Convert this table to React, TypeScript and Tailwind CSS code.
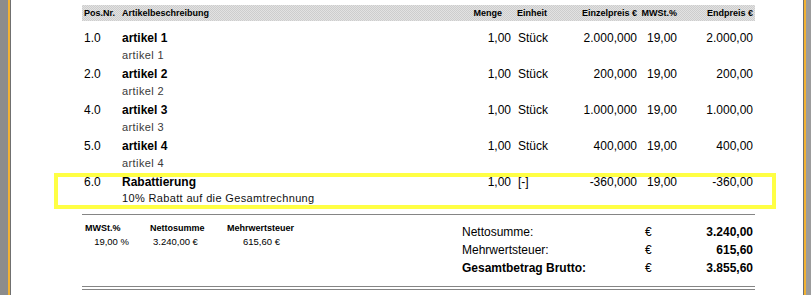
import React from "react";

type Row = {
  pos: string;
  title: string;
  sub: string;
  subAlt?: boolean;
  menge: string;
  einheit: string;
  einzel: string;
  mwst: string;
  end: string;
};

const rows: Row[] = [
  { pos: "1.0", title: "artikel 1", sub: "artikel 1", menge: "1,00", einheit: "Stück", einzel: "2.000,000", mwst: "19,00", end: "2.000,00" },
  { pos: "2.0", title: "artikel 2", sub: "artikel 2", menge: "1,00", einheit: "Stück", einzel: "200,000", mwst: "19,00", end: "200,00" },
  { pos: "4.0", title: "artikel 3", sub: "artikel 3", menge: "1,00", einheit: "Stück", einzel: "1.000,000", mwst: "19,00", end: "1.000,00" },
  { pos: "5.0", title: "artikel 4", sub: "artikel 4", menge: "1,00", einheit: "Stück", einzel: "400,000", mwst: "19,00", end: "400,00" },
  { pos: "6.0", title: "Rabattierung", sub: "10% Rabatt auf die Gesamtrechnung", subAlt: true, menge: "1,00", einheit: "[-]", einzel: "-360,000", mwst: "19,00", end: "-360,00" },
];

export default function App() {
  return (
    <div
      className="w-[811px] h-[295px] flex bg-white text-black overflow-hidden"
      style={{ fontFamily: '"Liberation Sans", Arial, sans-serif' }}
    >
      {/* left frame */}
      <div className="w-[8px] h-full bg-[#8c8c8c]" />
      <div className="w-[2px] h-full bg-[#f2b233]" />
      <div className="w-[1px] h-full bg-[#707070]" />

      {/* page */}
      <div className="relative flex-1 h-full pl-[71px] pt-[5px]">
        <div className="w-[673px] flex flex-col">
          {/* header */}
          <div className="h-[16px] flex items-center text-[9px] font-bold leading-none bg-[repeating-conic-gradient(#cdcdcd_0%_25%,#e2e2e2_0%_50%)] bg-[length:2px_2px]">
            <div className="w-[40px] pl-[2px]">Pos.Nr.</div>
            <div className="w-[349px]">Artikelbeschreibung</div>
            <div className="w-[40px] text-right pr-[9px] whitespace-nowrap">Menge</div>
            <div className="w-[58px] pl-[6px]">Einheit</div>
            <div className="w-[68px] text-right whitespace-nowrap">Einzelpreis €</div>
            <div className="w-[40px] text-right">MWSt.%</div>
            <div className="w-[76px] text-right whitespace-nowrap">Endpreis €</div>
          </div>

          {/* rows */}
          <div className="mt-[10px] flex flex-col">
            {rows.map((r) => (
              <div key={r.pos} className="h-[36px] flex flex-col">
                <div className="h-[14px] flex items-center text-[12px] leading-[14px]">
                  <div className="w-[40px] pl-[2px]">{r.pos}</div>
                  <div className="w-[349px] font-bold">{r.title}</div>
                  <div className="w-[40px] text-right">{r.menge}</div>
                  <div className="w-[58px] pl-[7px]">{r.einheit}</div>
                  <div className="w-[68px] text-right">{r.einzel}</div>
                  <div className="w-[40px] text-right">{r.mwst}</div>
                  <div className="w-[76px] text-right">{r.end}</div>
                </div>
                <div
                  className={
                    r.subAlt
                      ? "mt-[2px] h-[14px] pl-[40px] text-[11px] leading-[14px] tracking-[0.35px] text-[#111]"
                      : "mt-[3px] h-[14px] pl-[40px] text-[11px] leading-[14px] tracking-[0.4px] text-[#3a3a3a]"
                  }
                >
                  {r.sub}
                </div>
              </div>
            ))}
          </div>

          {/* separator */}
          <div className="mt-[3px] h-[1px] bg-[#858585]" />

          {/* summary */}
          <div className="h-[71px] flex">
            <div className="w-[380px] flex pt-[7px]">
              <div className="w-[63px] flex flex-col">
                <div className="h-[12px] leading-[12px] text-[9px] font-bold pl-[3px]">MWSt.%</div>
                <div className="mt-[2px] h-[12px] leading-[12px] text-[9.5px] text-right pr-[16px]">19,00 %</div>
              </div>
              <div className="w-[77px] flex flex-col">
                <div className="h-[12px] leading-[12px] text-[9px] font-bold pl-[5px]">Nettosumme</div>
                <div className="mt-[2px] h-[12px] leading-[12px] text-[9.5px] pl-[8px]">3.240,00 €</div>
              </div>
              <div className="w-[100px] flex flex-col">
                <div className="h-[12px] leading-[12px] text-[9px] font-bold pl-[5px]">Mehrwertsteuer</div>
                <div className="mt-[2px] h-[12px] leading-[12px] text-[9.5px] pl-[21px]">615,60 €</div>
              </div>
            </div>
            <div className="w-[293px] pt-[8px] flex flex-col text-[12px] leading-[18px]">
              <div className="flex h-[18px]">
                <div className="w-[183px]">Nettosumme:</div>
                <div className="w-[20px]">€</div>
                <div className="flex-1 text-right pr-[2px] font-bold">3.240,00</div>
              </div>
              <div className="flex h-[18px]">
                <div className="w-[183px]">Mehrwertsteuer:</div>
                <div className="w-[20px]">€</div>
                <div className="flex-1 text-right pr-[2px] font-bold">615,60</div>
              </div>
              <div className="flex h-[18px] font-bold">
                <div className="w-[183px]">Gesamtbetrag Brutto:</div>
                <div className="w-[20px] font-normal">€</div>
                <div className="flex-1 text-right pr-[2px]">3.855,60</div>
              </div>
            </div>
          </div>

          {/* double line */}
          <div className="h-[1px] bg-[#858585]" />
          <div className="mt-[2px] h-[1px] bg-[#858585]" />
        </div>

        {/* highlight box overlay */}
        <div className="absolute left-[43px] top-[173px] w-[722px] h-[36px] border-4 border-[#ffff44] pointer-events-none" />
      </div>

      {/* right frame */}
      <div className="w-[1px] h-full bg-[#707070]" />
      <div className="w-[2px] h-full bg-[#f2b233]" />
      <div className="w-[5px] h-full bg-[#9c9c9c]" />
    </div>
  );
}
